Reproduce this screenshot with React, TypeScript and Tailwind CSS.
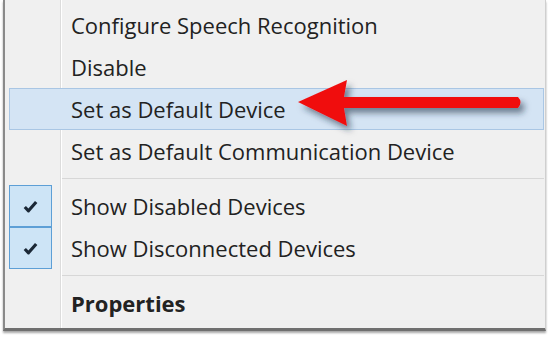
import React from "react";

const font = { fontFamily: '"Open Sans", "Noto Sans", sans-serif' };

function Check() {
  return (
    <svg width="15" height="13" viewBox="0 0 15 13">
      <path d="M1.8 7 L5.5 10.8 L13.2 2" fill="none" stroke="#1b2836" strokeWidth="3.2" strokeLinejoin="round" />
    </svg>
  );
}

function Row({
  label,
  highlighted,
  checked,
  bold,
}: {
  label: string;
  highlighted?: boolean;
  checked?: boolean;
  bold?: boolean;
}) {
  return (
    <div className="relative flex h-[42px] items-center">
      {highlighted && (
        <div className="absolute inset-y-0 left-[4px] right-0 border border-[#a9c6e4] bg-[#d4e4f4]" />
      )}
      <div className="relative flex h-full w-[57px] items-center justify-start pl-[4px]">
        {checked && (
          <div className="flex h-full w-[43px] items-center justify-center border border-[#5d9fd6] bg-[#cde4f6]">
            <Check />
          </div>
        )}
      </div>
      <div
        className={`relative pl-[9px] text-[22px] leading-none text-[#222222] ${bold ? "font-bold" : ""}`}
      >
        {label}
      </div>
    </div>
  );
}

function Sep() {
  return (
    <div className="flex h-[13px] items-center pl-[57px]">
      <div className="h-px flex-1 bg-[#d7d7d7]" />
    </div>
  );
}

export default function App() {
  return (
    <div className="relative h-[340px] w-[550px] overflow-hidden bg-white" style={font}>
      <div className="relative ml-[3px] w-[543px] border-l-[2px] border-r border-b-[3px] border-l-[#8a8a8a] border-r-[#cfcfcf] border-b-[#6f6f6f] bg-[#f0f0f0] pt-[4px] pb-[4px] pr-[1px] shadow-[0_2px_2px_rgba(0,0,0,0.35)]">
        <div className="absolute inset-y-0 left-[55px] w-px bg-[#dcdcdc]" />
        <div className="absolute inset-y-0 left-[56px] w-px bg-white" />
        <Row label="Configure Speech Recognition" />
        <Row label="Disable" />
        <Row label="Set as Default Device" highlighted />
        <Row label="Set as Default Communication Device" />
        <Sep />
        <Row label="Show Disabled Devices" checked />
        <Row label="Show Disconnected Devices" checked />
        <Sep />
        <Row label="Properties" bold />
      </div>
      <svg className="absolute left-0 top-0" width="550" height="340" viewBox="0 0 550 340">
        <defs>
          <filter id="sh" x="-20%" y="-50%" width="140%" height="200%">
            <feGaussianBlur in="SourceAlpha" stdDeviation="3" />
            <feOffset dx="4" dy="5" result="b" />
            <feFlood floodColor="#1c2c40" floodOpacity="0.55" />
            <feComposite in2="b" operator="in" />
            <feMerge>
              <feMergeNode />
              <feMergeNode in="SourceGraphic" />
            </feMerge>
          </filter>
        </defs>
        <g filter="url(#sh)">
          <path d="M298 102 L347 80 L344 97 L518 97 Q523 102 518 108 L344 108 L347 126 Z" fill="#f01010" />
        </g>
      </svg>
    </div>
  );
}
